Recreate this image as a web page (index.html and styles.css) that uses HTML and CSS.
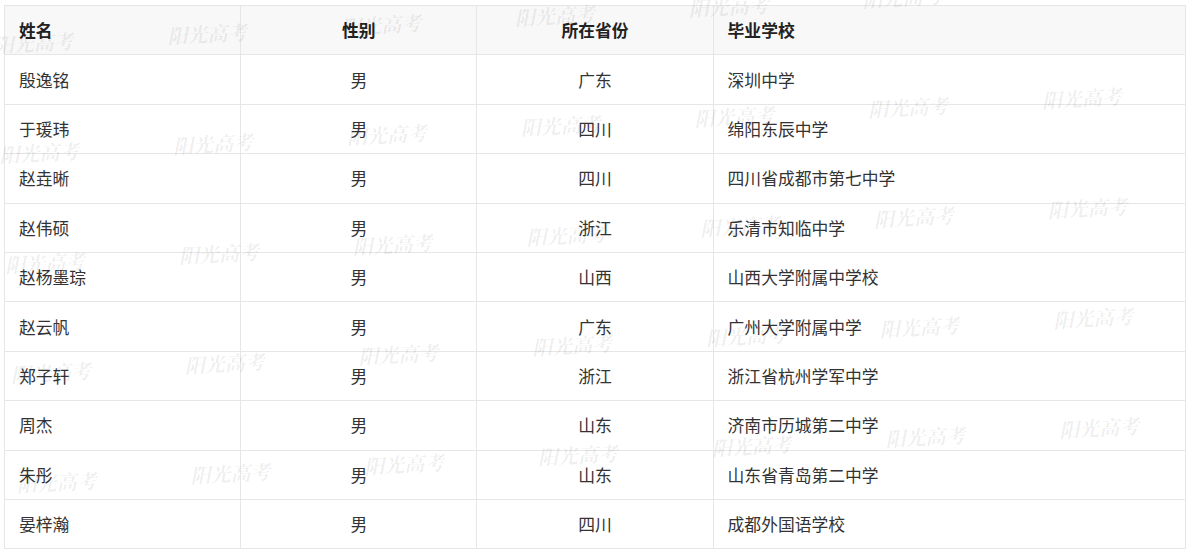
FILE: index.html
```html
<!DOCTYPE html>
<html lang="zh-CN">
<head>
<meta charset="utf-8">
<title>录取名单</title>
<link rel="stylesheet" href="styles.css">
</head>
<body>
<div class="page">
  <table class="list">
    <colgroup>
      <col class="w20"><col class="w20"><col class="w20"><col class="w40">
    </colgroup>
    <thead>
      <tr><th class="l">姓名</th><th class="c">性别</th><th class="c">所在省份</th><th class="l">毕业学校</th></tr>
    </thead>
    <tbody>
      <tr><td class="l">殷逸铭</td><td class="c">男</td><td class="c">广东</td><td class="l">深圳中学</td></tr>
      <tr><td class="l">于瑗玮</td><td class="c">男</td><td class="c">四川</td><td class="l">绵阳东辰中学</td></tr>
      <tr><td class="l">赵垚晰</td><td class="c">男</td><td class="c">四川</td><td class="l">四川省成都市第七中学</td></tr>
      <tr><td class="l">赵伟硕</td><td class="c">男</td><td class="c">浙江</td><td class="l">乐清市知临中学</td></tr>
      <tr><td class="l">赵杨墨琮</td><td class="c">男</td><td class="c">山西</td><td class="l">山西大学附属中学校</td></tr>
      <tr><td class="l">赵云帆</td><td class="c">男</td><td class="c">广东</td><td class="l">广州大学附属中学</td></tr>
      <tr><td class="l">郑子轩</td><td class="c">男</td><td class="c">浙江</td><td class="l">浙江省杭州学军中学</td></tr>
      <tr><td class="l">周杰</td><td class="c">男</td><td class="c">山东</td><td class="l">济南市历城第二中学</td></tr>
      <tr><td class="l">朱彤</td><td class="c">男</td><td class="c">山东</td><td class="l">山东省青岛第二中学</td></tr>
      <tr><td class="l">晏梓瀚</td><td class="c">男</td><td class="c">四川</td><td class="l">成都外国语学校</td></tr>
    </tbody>
  </table>
  <div class="wm" aria-hidden="true">
    <div class="wm-grid">
      <span>阳光高考</span><span>阳光高考</span><span>阳光高考</span><span>阳光高考</span><span>阳光高考</span><span>阳光高考</span><span>阳光高考</span>
      <span>阳光高考</span><span>阳光高考</span><span>阳光高考</span><span>阳光高考</span><span>阳光高考</span><span>阳光高考</span><span>阳光高考</span>
      <span>阳光高考</span><span>阳光高考</span><span>阳光高考</span><span>阳光高考</span><span>阳光高考</span><span>阳光高考</span><span>阳光高考</span>
      <span>阳光高考</span><span>阳光高考</span><span>阳光高考</span><span>阳光高考</span><span>阳光高考</span><span>阳光高考</span><span>阳光高考</span>
      <span>阳光高考</span><span>阳光高考</span><span>阳光高考</span><span>阳光高考</span><span>阳光高考</span><span>阳光高考</span><span>阳光高考</span>
    </div>
  </div>
</div>
</body>
</html>
```

FILE: styles.css
```css
html, body {
  margin: 0;
  padding: 0;
  background: #ffffff;
  overflow: hidden;
}

body {
  font-family: "Noto Sans CJK SC", "Liberation Sans", sans-serif;
  color: #333333;
}

.page {
  position: relative;
  padding: 5px 4px;
  overflow: hidden;
}

.list {
  width: 100%;
  border-collapse: collapse;
  table-layout: fixed;
  font-size: 16.8px;
}

.w20 { width: 20%; }
.w40 { width: 40%; }

.list th,
.list td {
  border: 1px solid #e6e6e6;
  height: 48.4px;
  padding: 0 14px;
  line-height: 24px;
  vertical-align: middle;
  white-space: nowrap;
}

.list th {
  background: #f8f8f8;
  font-weight: bold;
  color: #222222;
}

.list .l { text-align: left; }
.list .c { text-align: center; }

.wm {
  position: absolute;
  inset: 0;
  overflow: hidden;
  pointer-events: none;
}

.wm-grid {
  position: absolute;
  left: -7px;
  top: 35px;
  transform: rotate(-3deg);
  transform-origin: 0 0;
  display: grid;
  grid-template-columns: repeat(7, 174px);
  grid-auto-rows: 110px;
}

.wm-grid span {
  font-family: "Noto Serif CJK SC", "Noto Sans CJK SC", serif;
  font-size: 20px;
  line-height: 20px;
  font-weight: bold;
  font-style: italic;
  color: rgba(0, 0, 0, 0.07);
  white-space: nowrap;
}
```
